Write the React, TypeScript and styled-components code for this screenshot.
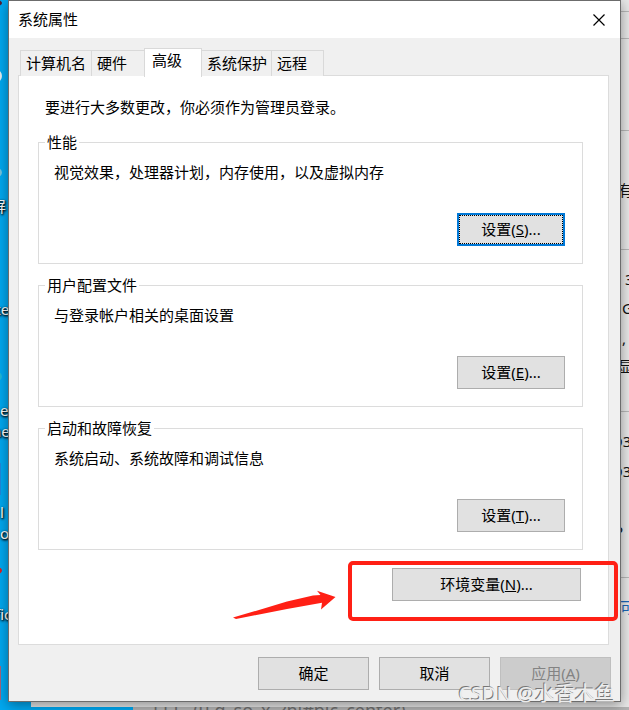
import React from "react";
import styled, { createGlobalStyle, css } from "styled-components";

const GlobalStyle = createGlobalStyle`
  * { box-sizing: border-box; }
  body {
    margin: 0;
    font-family: "Noto Sans", "Noto Sans CJK SC", sans-serif;
    font-size: 15px;
    line-height: 20px;
    color: #000;
  }
  button { font: inherit; color: inherit; }
`;

const Desktop = styled.main`
  position: relative;
  min-height: 100vh;
  padding: 0 8px 8px;
  overflow: hidden;
  background: #00a8f0;
`;

const DesktopLabel = styled.span<{ $top: number; $left: number }>`
  position: absolute;
  top: ${(p) => p.$top}px;
  left: ${(p) => p.$left}px;
  color: #fff;
  white-space: nowrap;
  text-shadow: 1px 1px 2px #000, 0 1px 3px #000;
`;

const DesktopIcon = styled.span<{ $top: number; $height: number; $color: string; $round?: boolean }>`
  position: absolute;
  left: ${(p) => (p.$round ? -8 : -11)}px;
  top: ${(p) => p.$top}px;
  width: ${(p) => (p.$round ? 10 : 12)}px;
  height: ${(p) => p.$height}px;
  border-radius: ${(p) => (p.$round ? "50%" : "0")};
  background: ${(p) => p.$color};
`;

const BackWindow = styled.section`
  position: absolute;
  inset: 0 0 3px 31px;
  background: #e8e8e8;
`;

const BackPage = styled.section`
  position: absolute;
  left: 133px;
  right: 0;
  bottom: 0;
  height: 3px;
  overflow: hidden;
  background: #b4b4b4;
`;

const BackPageText = styled.p`
  margin: -7px 0 0 20px;
  font-size: 18px;
  line-height: 20px;
  color: #6d6d6d;
  white-space: pre;
`;

const PageRule = styled.span<{ $top: number }>`
  position: absolute;
  right: 0;
  top: ${(p) => p.$top}px;
  width: 16px;
  height: 1px;
  background: #b8b8b8;
`;

const PageText = styled.span<{ $top: number; $right: number; $link?: boolean }>`
  position: absolute;
  top: ${(p) => p.$top}px;
  right: ${(p) => p.$right}px;
  width: 20px;
  color: ${(p) => (p.$link ? "#1a66b8" : "#111")};
  white-space: nowrap;
`;

const Dialog = styled.section`
  position: relative;
  border: 1px solid #6c6c6c;
  background: #f0f0f0;
  box-shadow: 0 3px 12px rgba(0, 0, 0, 0.4);
`;

const TitleBar = styled.header`
  display: flex;
  align-items: center;
  justify-content: space-between;
  height: 37px;
  padding: 0 8px 0 9px;
  background: #fff;
`;

const Title = styled.h1`
  margin: 0;
  padding-bottom: 2px;
  font-size: 15px;
  font-weight: 400;
`;

const CloseButton = styled.button`
  display: grid;
  place-items: center;
  width: 26px;
  height: 26px;
  padding: 0;
  border: 0;
  background: transparent;
`;

const TabBar = styled.div`
  display: flex;
  align-items: flex-end;
  height: 38px;
  padding-left: 11px;
`;

const Tab = styled.button<{ $width: number; $active?: boolean }>`
  width: ${(p) => p.$width}px;
  height: 26px;
  margin-right: -1px;
  padding: 0 0 2px 5px;
  border: 1px solid #d9d9d9;
  border-bottom: 0;
  background: #f0f0f0;
  text-align: left;
  white-space: nowrap;
  ${(p) =>
    p.$active &&
    css`
      position: relative;
      z-index: 1;
      height: 29px;
      margin-bottom: -1px;
      padding: 0 0 6px 7px;
      background: #fff;
    `}
`;

const Panel = styled.div`
  margin: -1px 11px 0 9px;
  padding: 21px 25px 43px 19px;
  border: 1px solid #dcdcdc;
  background: #fff;
`;

const Intro = styled.p`
  margin: 0 0 15px 7px;
`;

const Group = styled.fieldset`
  min-width: 0;
  height: 132px;
  margin: 0 0 11px;
  padding: 0;
  border: 0;
`;

const GroupFrame = styled.div`
  display: flex;
  flex-direction: column;
  justify-content: space-between;
  height: 122px;
  margin-top: -10px;
  padding: 19px 17px 17px 15px;
  border: 1px solid #dcdcdc;
`;

const Legend = styled.legend`
  position: relative;
  margin-left: 7px;
  padding: 0 2px;
  background: #fff;
`;

const GroupText = styled.p`
  margin: 0;
`;

const PushButton = styled.button<{ $width: number; $focused?: boolean }>`
  flex: none;
  align-self: flex-end;
  width: ${(p) => p.$width}px;
  height: 33px;
  padding: 0 0 2px;
  border: 1px solid #adadad;
  background: #e1e1e1;
  &:disabled {
    border-color: #bfbfbf;
    background: #cccccc;
    color: #838383;
  }
  ${(p) =>
    p.$focused &&
    css`
      border: 2px solid #0078d7;
      outline: 1px dotted #000;
      outline-offset: -3px;
    `}
`;

const EnvironmentRow = styled.div`
  position: relative;
  display: flex;
  justify-content: flex-end;
  margin-top: 18px;
  padding-right: 2px;
`;

const Highlight = styled.span`
  position: absolute;
  top: -7px;
  right: -35px;
  width: 270px;
  height: 60px;
  border: 4px solid #ff2015;
  border-radius: 5px;
  pointer-events: none;
`;

const Arrow = styled.svg`
  position: absolute;
  top: 21px;
  right: 246px;
`;

const Footer = styled.footer`
  display: flex;
  justify-content: flex-end;
  gap: 10px;
  padding: 12px 9px 11px;
`;

const Watermark = styled.span`
  position: absolute;
  right: 5px;
  bottom: -6px;
  font-size: 20px;
  line-height: 26px;
  color: #ececec;
  white-space: nowrap;
  text-shadow: -1px -1px 0 #777;
`;

const desktopLabels = [
  { text: "屏", top: 196, left: -9 },
  { text: "xe", top: 299, left: -7 },
  { text: "e", top: 400, left: 0 },
  { text: "ne", top: 421, left: -8 },
  { text: "l", top: 502, left: 0 },
  { text: "o", top: 523, left: 0 },
  { text: "fic", top: 604, left: -5 },
];

const desktopIcons = [
  { top: 0, height: 6, color: "#501c34", round: true },
  { top: 70, height: 12, color: "#e4edf0", round: true },
  { top: 168, height: 9, color: "#74c4de", round: true },
  { top: 372, height: 9, color: "#20b8d8", round: true },
  { top: 463, height: 32, color: "#2088dc" },
  { top: 567, height: 7, color: "#e02020", round: true },
  { top: 666, height: 34, color: "#a4647c" },
];

const pageTexts = [
  { text: "有", top: 180, right: -9 },
  { text: "3", top: 269, right: -16 },
  { text: "G", top: 298, right: -13 },
  { text: ",", top: 328, right: -13 },
  { text: "显", top: 356, right: -9 },
  { text: "Q3", top: 431, right: -2 },
  { text: "Q3", top: 461, right: -2 },
  { text: "P", top: 521, right: -5 },
  { text: "可", top: 597, right: -11, link: true },
];

const tabs = [
  { label: "计算机名", width: 72 },
  { label: "硬件", width: 54 },
  { label: "高级", width: 58, active: true },
  { label: "系统保护", width: 71 },
  { label: "远程", width: 53 },
];

const groups = [
  { title: "性能", text: "视觉效果，处理器计划，内存使用，以及虚拟内存", accessKey: "S", focused: true },
  { title: "用户配置文件", text: "与登录帐户相关的桌面设置", accessKey: "E" },
  { title: "启动和故障恢复", text: "系统启动、系统故障和调试信息", accessKey: "T" },
];

export default function App() {
  return (
    <>
      <GlobalStyle />
      <Desktop>
        {desktopIcons.map((i) => (
          <DesktopIcon key={i.top} $top={i.top} $height={i.height} $color={i.color} $round={i.round} />
        ))}
        <BackWindow />
        <BackPage>
          <BackPageText>{"EEI   (u.g_so_x_?hi#pic_center)"}</BackPageText>
        </BackPage>
        {desktopLabels.map((l) => (
          <DesktopLabel key={l.top} $top={l.top} $left={l.left}>
            {l.text}
          </DesktopLabel>
        ))}
        {[11, 38, 130, 249, 411, 577].map((top) => (
          <PageRule key={top} $top={top} />
        ))}
        {pageTexts.map((t) => (
          <PageText key={t.top} $top={t.top} $right={t.right} $link={t.link}>
            {t.text}
          </PageText>
        ))}
        <Dialog role="dialog" aria-labelledby="dialog-title">
          <TitleBar>
            <Title id="dialog-title">系统属性</Title>
            <CloseButton aria-label="关闭">
              <svg width="12" height="12" viewBox="0 0 12 12" stroke="#000" strokeWidth="1.2">
                <path d="M.5.5l11 11M11.5.5l-11 11" />
              </svg>
            </CloseButton>
          </TitleBar>
          <TabBar role="tablist">
            {tabs.map((t) => (
              <Tab key={t.label} role="tab" aria-selected={!!t.active} $width={t.width} $active={t.active}>
                {t.label}
              </Tab>
            ))}
          </TabBar>
          <Panel role="tabpanel">
            <Intro>要进行大多数更改，你必须作为管理员登录。</Intro>
            {groups.map((g) => (
              <Group key={g.title}>
                <Legend>{g.title}</Legend>
                <GroupFrame>
                  <GroupText>{g.text}</GroupText>
                  <PushButton $width={108} $focused={g.focused}>
                    设置(<u>{g.accessKey}</u>)...
                  </PushButton>
                </GroupFrame>
              </Group>
            ))}
            <EnvironmentRow>
              <Arrow width="104" height="31" viewBox="0 0 104 31" aria-hidden="true">
                <path d="M0 28.6L54 12.6L80 6.4L87.5 6L84 1.8L102.5 8L88 20.5L89 13.8L54 20L3 30Z" fill="#ff2015" />
              </Arrow>
              <PushButton $width={189}>
                环境变量(<u>N</u>)...
              </PushButton>
              <Highlight />
            </EnvironmentRow>
          </Panel>
          <Footer>
            <PushButton $width={111}>确定</PushButton>
            <PushButton $width={111}>取消</PushButton>
            <PushButton $width={111} disabled>
              应用(<u>A</u>)
            </PushButton>
          </Footer>
          <Watermark>CSDN @水香木鱼</Watermark>
        </Dialog>
      </Desktop>
    </>
  );
}
